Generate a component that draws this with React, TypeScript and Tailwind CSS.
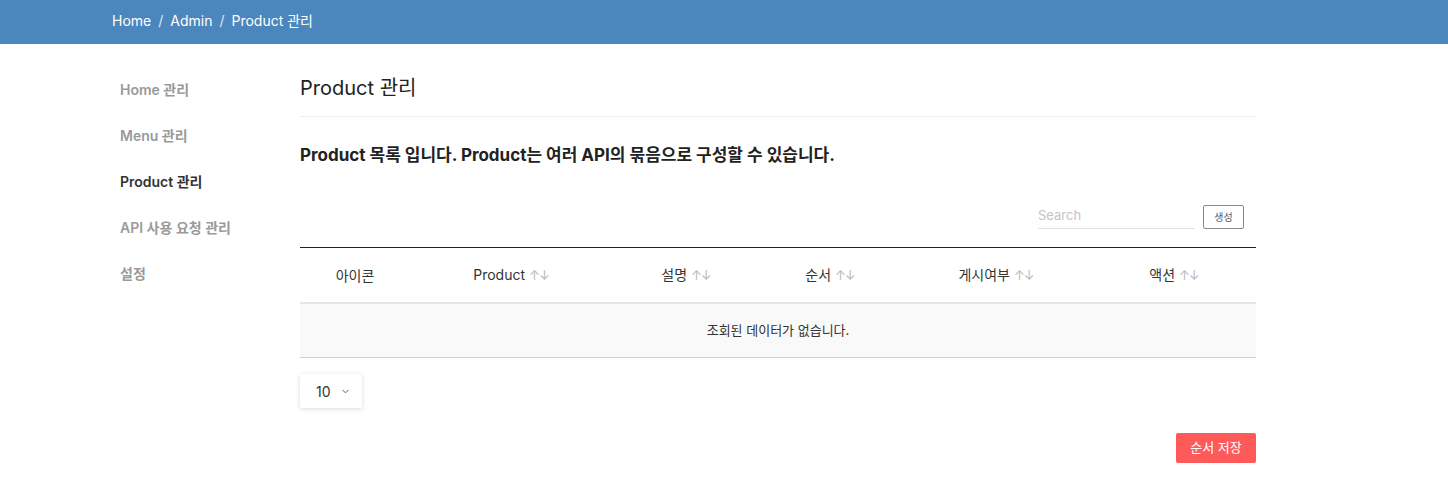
import { ChevronDown } from 'lucide-react';

const font = { fontFamily: 'Inter, "Noto Sans CJK KR", sans-serif' };

const menus = [
  { label: 'Home 관리', active: false },
  { label: 'Menu 관리', active: false },
  { label: 'Product 관리', active: true },
  { label: 'API 사용 요청 관리', active: false },
  { label: '설정', active: false },
];

const columns = [
  { label: '아이콘', width: 'w-[110px]', sort: false },
  { label: 'Product', width: 'w-[202px]', sort: true },
  { label: '설명', width: 'w-[148px]', sort: true },
  { label: '순서', width: 'w-[140px]', sort: true },
  { label: '게시여부', width: 'w-[192px]', sort: true },
  { label: '액션', width: 'flex-1', sort: true },
];

function SortArrows() {
  return <span className="ml-1 text-[13px] text-[#bbb] tracking-[-1px]">↑↓</span>;
}

export default function App() {
  return (
    <div className="min-h-[486px] bg-white text-[#222]" style={font}>
      <header className="h-[44px] bg-[#4b86bd] flex items-center pl-[112px] pb-[4px] text-[14px] text-white">
        <span>Home</span>
        <span className="mx-[7px] text-white/80">/</span>
        <span>Admin</span>
        <span className="mx-[7px] text-white/80">/</span>
        <span>Product 관리</span>
      </header>

      <div className="flex">
        <nav className="w-[300px] pl-[120px] pt-[35px] flex flex-col">
          {menus.map((m) => (
            <div
              key={m.label}
              className={
                'h-[46px] text-[14px] font-semibold ' + (m.active ? 'text-[#333]' : 'text-[#9a9a9a]')
              }
            >
              {m.label}
            </div>
          ))}
        </nav>

        <main className="w-[956px] pt-[31px]">
          <h1 className="text-[20px] leading-[26px] pb-[15px] border-b border-[#ececec]">Product 관리</h1>
          <p className="mt-[26px] text-[17px] font-bold leading-[24px] text-[#222]">
            Product 목록 입니다. Product는 여러 API의 묶음으로 구성할 수 있습니다.
          </p>

          <div className="mt-[35px] flex justify-end items-start pr-[12px]">
            <input
              placeholder="Search"
              className="w-[157px] h-[27px] border-b border-[#e3e3e3] text-[13px] outline-none placeholder:text-[#c4c4c4]"
            />
            <button className="ml-[8px] mt-[3px] w-[41px] h-[24px] border border-[#8a8a8a] rounded-[2px] text-[10px] text-[#556]">
              생성
            </button>
          </div>

          <div className="mt-[18px] border-t border-[#222]">
            <div className="flex h-[56px] items-center border-b-2 border-[#e6e6e6] text-[14px] text-[#333]">
              {columns.map((c) => (
                <div key={c.label} className={c.width + ' text-center'}>
                  {c.label}
                  {c.sort && <SortArrows />}
                </div>
              ))}
            </div>
            <div className="h-[54px] bg-[#f9f9f9] border-b border-[#cfcfcf] flex items-center justify-center text-[13px] text-[#333]">
              조회된 데이터가 없습니다.
            </div>
          </div>

          <div className="mt-[16px] w-[62px] h-[34px] bg-white shadow-[0_1px_5px_rgba(0,0,0,0.15)] rounded-[2px] flex items-center pl-[16px] text-[14px] text-[#333]">
            10
            <ChevronDown className="ml-[9px] w-[11px] h-[11px] text-[#555]" strokeWidth={2} />
          </div>

          <div className="mt-[25px] flex justify-end">
            <button className="w-[80px] h-[30px] bg-[#ff5a5a] rounded-[2px] text-white text-[13px]">
              순서 저장
            </button>
          </div>
        </main>
      </div>
    </div>
  );
}
